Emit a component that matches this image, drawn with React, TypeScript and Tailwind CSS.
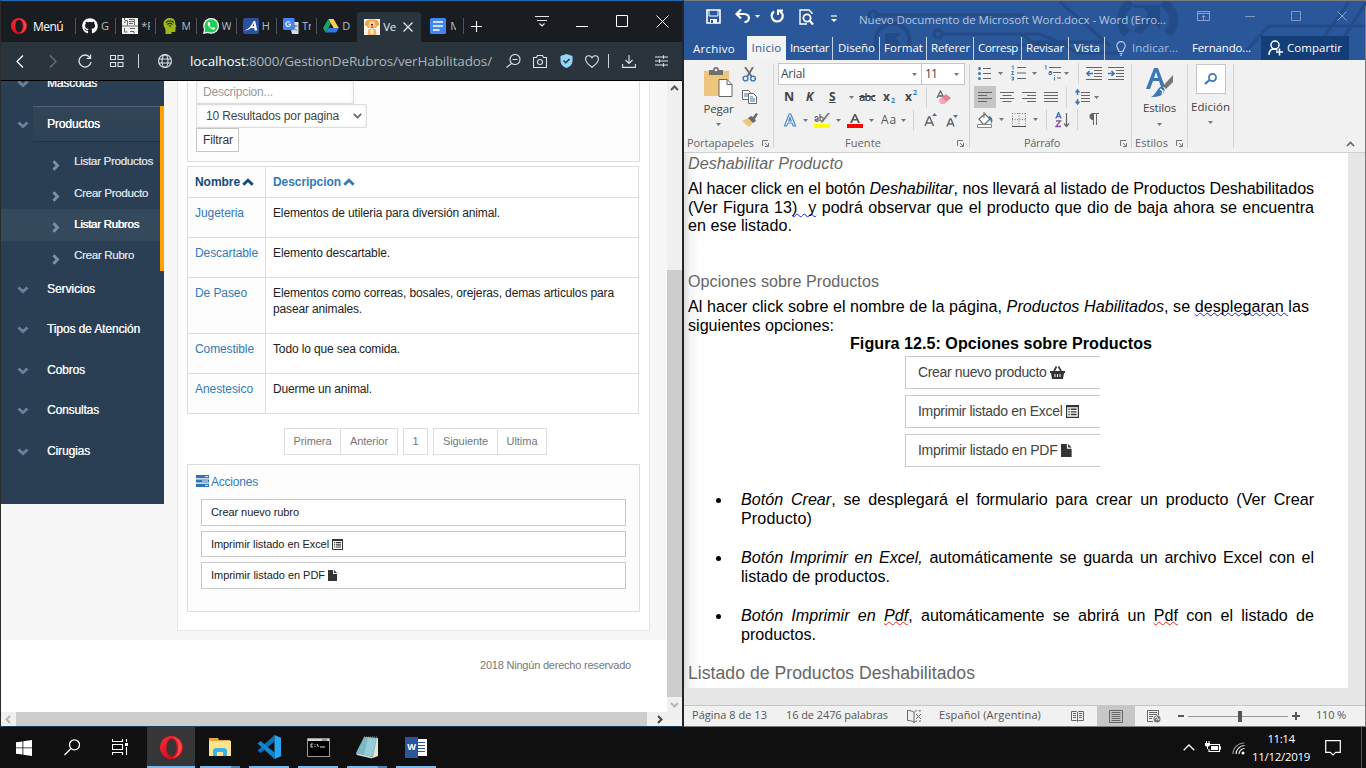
import React, { useLayoutEffect, useRef } from "react";
import { FaGithub } from "react-icons/fa";

const UI = "font-['Open_Sans','Noto_Sans',sans-serif]";
const AR = "font-['Liberation_Sans',Arial,sans-serif]";

/** Text whose tracking is adjusted so that it spans exactly `w` pixels. */
function Fit({ w, className = "", children }: { w: number; className?: string; children: React.ReactNode }) {
  const ref = useRef<HTMLSpanElement>(null);
  useLayoutEffect(() => {
    const el = ref.current;
    if (!el) return;
    el.style.letterSpacing = "0px";
    const natural = el.getBoundingClientRect().width;
    const n = (el.textContent || "").length || 1;
    el.style.letterSpacing = `${(w - natural) / n}px`;
  }, [w]);
  return (
    <span ref={ref} className={`inline-block shrink-0 whitespace-pre ${className}`}>
      {children}
    </span>
  );
}

function Svg({ w, h, className = "", children }: { w: number; h: number; className?: string; children: React.ReactNode }) {
  return (
    <svg width={w} height={h} viewBox={`0 0 ${w} ${h}`} fill="none" className={`block shrink-0 ${className}`}>
      {children}
    </svg>
  );
}

function OperaO({ size, hole }: { size: number; hole: string }) {
  return (
    <svg width={size} height={size} viewBox="0 0 24 24" className="block shrink-0">
      <defs>
        <linearGradient id="og" x1="0" y1="0" x2="1" y2="1">
          <stop offset="0" stopColor="#ff2b3a" />
          <stop offset="0.6" stopColor="#d8101f" />
          <stop offset="1" stopColor="#b00a18" />
        </linearGradient>
      </defs>
      <circle cx="12" cy="12" r="12" fill="url(#og)" />
      <path d="M12 1c6 0 11 5 11 11s-5 11-11 11c5-1 7-6 7-11S17 2 12 1z" fill="#f4494d" />
      <ellipse cx="12" cy="12" rx="5.400" ry="9.400" fill={hole} />
    </svg>
  );
}

function Tab({ icon, label }: { icon: React.ReactNode; label: string }) {
  return (
    <div className="flex h-4 w-[40.2px] shrink-0 items-center border-l border-[#50555b]">
      <div className="ml-[6px] h-4 w-4 shrink-0">{icon}</div>
      <span className="ml-[3px] w-[9px] shrink-0 overflow-hidden text-[11px] leading-4 whitespace-nowrap text-[#b8bcc0]">{label}</span>
    </div>
  );
}

function BrowserTabs() {
  return (
    <div className={`flex h-[41px] shrink-0 bg-[#191c21] ${UI}`}>
      <div className="mt-[16px] flex h-[18px] w-[74px] shrink-0 items-center pl-[10px]">
        <OperaO size={16} hole="#191c21" />
        <Fit w={30} className="mt-[2px] ml-[6px] text-[12px] text-white">Menú</Fit>
      </div>
      <div className="mt-[17px] flex">
        <Tab label="G" icon={<FaGithub size={16} color="#fff" />} />
        <Tab
          label="*F"
          icon={
            <Svg w={16} h={16}>
              <path d="M0 0h16v16H0z" fill="#f2f2f2" />
              <path d="M3 5V2.500h2.500M7 1.500h5.500v2H7M7 5.500h4M0 8h16M2.500 10v4h3M8 10.500h5M8 13.500h4v2M5.500 2.500v5M12.500 4v3M2.500 0v2" stroke="#666" />
            </Svg>
          }
        />
        <Tab
          label="M"
          icon={
            <Svg w={16} h={16}>
              <path d="M8 0C4 0 1.500 2.500 1.500 6c0 3 2 4 2 6v4h6v-2h3c1 0 1-1 1-2V9.500l1-.8-1.200-2.500C13.500 2 11.500 0 8 0z" fill="#9bb71b" />
              <path d="M4 4.500c2.500-2 5.500-2 8 0M5.300 6.500c1.500-1.300 3.800-1.300 5.300 0M7 8.200c.6-.5 1.400-.5 2 0" stroke="#20300a" strokeWidth="1.200" />
            </Svg>
          }
        />
        <Tab
          label="W"
          icon={
            <Svg w={16} h={16}>
              <circle cx="8.100" cy="7.900" r="7.900" fill="#fff" />
              <path d="M0 16l1.200-5L5 15z" fill="#fff" />
              <circle cx="8.100" cy="7.900" r="6.700" fill="#23cc55" />
              <path d="M1.500 14.500l1-4 3 3z" fill="#23cc55" />
              <path d="M5.500 4c-1.500 1-1 3.500 1.500 5.800s4.500 2.300 5.300.5l-2-1.200-1 .9C8 9.400 7 8.500 6.600 7.400l.8-.8L6.500 4z" fill="#fff" />
            </Svg>
          }
        />
        <Tab
          label="H"
          icon={
            <Svg w={16} h={16}>
              <rect width="16" height="16" rx="2.500" fill="#2b4fa2" />
              <path d="M1.500 12.500C6 11 9 7 10.500 3h1.700l2 9.500h-2.600l-.3-2.500H8c-1.500 1.500-3.500 2.500-6.500 2.500zm7.800-4.200h1.900l-.3-3z" fill="#fff" />
            </Svg>
          }
        />
        <Tab
          label="Tr"
          icon={
            <Svg w={16} h={16}>
              <path d="M6 4h9.500v12H9z" fill="#dcdcdc" />
              <rect width="11.500" height="12" rx="1" fill="#4285f4" />
              <path d="M7 4.500A2.400 2.400 0 1 0 7.600 6.300H5.500" stroke="#fff" strokeWidth="1.100" />
              <path d="M9.500 8h5M12 6.800V8c0 2-1.500 4-2.500 4.500M10.500 9c.5 1.500 2 3 3.500 3.500" stroke="#607d9b" />
            </Svg>
          }
        />
        <Tab
          label="D"
          icon={
            <Svg w={16} h={16}>
              <path d="M5.300 1h5.200l5.300 9h-5.200z" fill="#ffcf48" />
              <path d="M5.300 1L0 10l2.700 4.600L7.900 5.500z" fill="#11a861" />
              <path d="M5.400 10h10.400l-2.600 4.600H2.700z" fill="#3777e3" />
            </Svg>
          }
        />
      </div>
      <div className="mt-[11px] ml-[1px] flex h-[30px] w-[64px] shrink-0 items-center rounded-t-[3px] bg-[#2a343c]">
        <Svg w={16} h={16} className="ml-[7px]">
          <path d="M0 0h16v16H0z" fill="#fbf3e6" />
          <path d="M2 2l3-1.500h6L14 2l1.500 4-2.500 1-1 2H4L3 7 .5 6z" fill="#eba24d" />
          <path d="M5.500 2h5l1 5-1.500 2.500h-4L4.500 7z" fill="#f8cf95" />
          <path d="M7 5h2v1.500H7z" fill="#5a2d1b" />
          <path d="M7 7.500h2.500V9H7z" fill="#e24a3b" />
          <path d="M4.500 10h7l1 6h-9z" fill="#f2b463" />
          <path d="M6.500 10.500h3V15h-3z" fill="#fff0d8" />
        </Svg>
        <Fit w={12.5} className="ml-[3px] text-[11.500px] text-[#e8eaec]">Ve</Fit>
        <Svg w={10} h={10} className="ml-[7px]">
          <path d="M.5 .5l9 9M9.500 .5l-9 9" stroke="#e8eaec" strokeWidth="1.200" />
        </Svg>
      </div>
      <div className="mt-[17px] ml-[9px] flex h-4 items-center">
        <Svg w={16} h={16}>
          <rect width="16" height="16" rx="1.500" fill="#4285f4" />
          <path d="M3 4h10M3 8h10M3 12h6.500" stroke="#fff" strokeWidth="1.700" />
        </Svg>
        <span className="ml-[4px] w-[6px] overflow-hidden text-[11.500px] text-[#b8bcc0]">M</span>
        <div className="ml-[7px] h-4 w-px bg-[#50555b]" />
        <Svg w={11} h={11} className="ml-[7px]">
          <path d="M5.500 0v11M0 5.500h11" stroke="#fff" strokeWidth="1.100" />
        </Svg>
      </div>
      <div className="mt-[14px] ml-[53px] flex h-[14px]">
        <Svg w={14} h={14}>
          <path d="M0 1.500h14M2 5.500h10M4.500 8.500L7 11l2.500-2.500" stroke="#e4e6e8" strokeWidth="1.200" />
        </Svg>
        <Svg w={12} h={14} className="ml-[27px]">
          <path d="M0 11.500h12" stroke="#fff" />
        </Svg>
        <Svg w={12} h={14} className="ml-[28px]">
          <path d="M.5 .5h11v11H.5z" stroke="#fff" />
        </Svg>
        <Svg w={13} h={14} className="ml-[28px]">
          <path d="M.5 .5l12 12M12.500 .5l-12 12" stroke="#fff" />
        </Svg>
      </div>
    </div>
  );
}

function AddressBar() {
  const s = { stroke: "#dfe3e6", strokeWidth: 1.1 };
  return (
    <div className={`flex h-[38px] shrink-0 items-center bg-[#2a343c] ${UI}`}>
      <Svg w={8} h={13} className="ml-[15px]"><path d="M7 .5L1 6.500l6 6" stroke="#fff" strokeWidth="1.200" /></Svg>
      <Svg w={8} h={13} className="ml-[25px]"><path d="M1 .5l6 6-6 6" stroke="#6c757c" strokeWidth="1.200" /></Svg>
      <Svg w={14} h={14} className="ml-[21px]"><path d="M11.800 3.300A6 6 0 1 0 13 8M12.500 .5v3.800H8.700" {...s} strokeWidth="1.300" /></Svg>
      <Svg w={14} h={12} className="ml-[18px]"><path d="M.5 .5h5v4h-5zM8 .5h5v4H8zM.5 7.500h5v4h-5zM8 7.500h5v4H8z" {...s} /></Svg>
      <div className="ml-[14px] h-[14px] w-px bg-[#cdd1d4]" />
      <Svg w={14} h={14} className="ml-[19px]">
        <circle cx="7" cy="7" r="6.400" {...s} />
        <ellipse cx="7" cy="7" rx="3" ry="6.400" {...s} />
        <path d="M.6 5h12.800M.6 9h12.800" {...s} />
      </Svg>
      <Fit w={302} className="ml-[18px] text-[13.500px] text-[#a9b4bc]"><span className="text-white">localhost</span><span className="text-[#c9d1d6]">:</span>8000/GestionDeRubros/verHabilitados/</Fit>
      <Svg w={15} h={14} className="ml-[14px]"><circle cx="9" cy="5.500" r="5" {...s} /><path d="M5.500 9.500L.5 13.500M6.500 5.500h5" {...s} /></Svg>
      <Svg w={14} h={13} className="ml-[12px]"><path d="M.5 2.500h3l1-2h5l1 2h3v10H.5z" {...s} /><circle cx="7" cy="7" r="2.500" {...s} /></Svg>
      <Svg w={13} h={14} className="ml-[13px]"><path d="M6.500 0L12.500 2v5c0 3.500-3 6-6 7-3-1-6-3.500-6-7V2z" fill="#92d6fb" /><path d="M3.500 6.500l2.300 2.300L9.500 5" stroke="#2a343c" strokeWidth="1.500" /></Svg>
      <Svg w={14} h={13} className="ml-[12px]"><path d="M7 12.300C2 8.500.6 6.500.6 4.200.6 2 2 .7 3.800.7 5.300.7 6.500 1.600 7 2.700 7.500 1.600 8.700.7 10.200.7 12 .7 13.400 2 13.400 4.200c0 2.300-1.400 4.300-6.400 8.100z" {...s} /></Svg>
      <div className="ml-[9px] h-[14px] w-px bg-[#cdd1d4]" />
      <Svg w={14} h={13} className="ml-[13px]"><path d="M7 0v8.500M3.500 5L7 8.500 10.500 5M.6 9v3.400h12.800V9" {...s} /></Svg>
      <Svg w={13} h={12} className="ml-[19px]"><path d="M0 2h13M0 6h13M0 10h13M8.500 .3v3.400M4.500 4.300v3.400M8.500 8.300v3.400" {...s} /></Svg>
    </div>
  );
}

function ChevDown() {
  return <Svg w={12} h={8} className="ml-[16px] mt-[1px]"><path d="M1.500 1.500L6 5.500l4.500-4" stroke="#66829c" strokeWidth="3" /></Svg>;
}
function SideItem({ label, w }: { label: string; w: number }) {
  return (
    <div className="flex h-[40.500px] items-center">
      <ChevDown />
      <Fit w={w} className="-mt-px ml-[18px] text-[12px] text-[#eef1f4] [text-shadow:0.2px_0_0_#eef1f4]">{label}</Fit>
    </div>
  );
}
function SubItem({ label, w, active = false }: { label: string; w: number; active?: boolean }) {
  return (
    <div className={`flex h-[31.200px] items-center ${active ? "bg-[#35495d]" : ""}`}>
      <Svg w={8} h={11} className="mt-[6px] ml-[51px]"><path d="M1.500 1.200l4 4.300-4 4.300" stroke="#7a92a8" strokeWidth="2.800" /></Svg>
      <Fit w={w} className={`-mt-[1px] ml-[14px] text-[11.500px] ${active ? "text-white [text-shadow:0.5px_0_0_#fff]" : "text-[#d3d9df] [text-shadow:0.2px_0_0_#d3d9df]"}`}>{label}</Fit>
    </div>
  );
}

function Sidebar() {
  return (
    <div className="h-[423px] w-[163px] shrink-0 overflow-hidden bg-[#2b3f54]">
      <div className="-mt-[18px] h-[43px]"><SideItem label="Mascotas" w={50} /></div>
      <div className="h-[165px] border-r-4 border-[#ffa200]">
        <div className="flex h-[36px] items-center">
          <ChevDown />
          <div className="ml-[4px] flex h-full flex-1 items-center border-t border-b border-t-[#4b6074] border-b-[#22333f] bg-gradient-to-b from-[#334556] to-[#2c4257]">
            <Fit w={53} className="ml-[14px] text-[12px] text-white [text-shadow:0.2px_0_0_#fff]">Productos</Fit>
          </div>
        </div>
        <div className="pt-[5px]">
          <SubItem label="Listar Productos" w={79} />
          <SubItem label="Crear Producto" w={74} />
          <SubItem label="Listar Rubros" w={65} active />
          <SubItem label="Crear Rubro" w={60} />
        </div>
      </div>
      <div className="-mt-[2px]">
        <SideItem label="Servicios" w={48} />
        <SideItem label="Tipos de Atención" w={93} />
        <SideItem label="Cobros" w={38} />
        <SideItem label="Consultas" w={52} />
        <SideItem label="Cirugias" w={43} />
      </div>
    </div>
  );
}

const rows = [
  { n: "Jugeteria", nw: 49, d: [["Elementos de utileria para diversión animal.", 227]], cls: "h-[40px]" },
  { n: "Descartable", nw: 63, d: [["Elemento descartable.", 117]], cls: "h-[40px]" },
  { n: "De Paseo", nw: 52, d: [["Elementos como correas, bosales, orejeras, demas articulos para", 341], ["pasear animales.", 89]], cls: "h-[56px]" },
  { n: "Comestible", nw: 59, d: [["Todo lo que sea comida.", 127]], cls: "h-[40px]" },
  { n: "Anestesico", nw: 58, d: [["Duerme un animal.", 99]], cls: "h-[40px]" },
] as { n: string; nw: number; d: [string, number][]; cls: string }[];

function SortUp({ color }: { color: string }) {
  return <Svg w={12} h={8} className="ml-[2px]"><path d="M1.300 6.800L6 2.300l4.700 4.500" stroke={color} strokeWidth="2.800" /></Svg>;
}
function ListIcon({ size = 11 }: { size?: number }) {
  return (
    <svg width={size} height={size} viewBox="0 0 11 11" className="block shrink-0">
      <path d="M.5 .5h10v10H.5z" fill="#fff" stroke="#333" />
      <path d="M0 0h11v2H0zM2 3h1.200v1.200H2zM2 5.200h1.200v1.200H2zM2 7.400h1.200v1.200H2zM4 3h5v1.200H4zM4 5.200h5v1.200H4zM4 7.400h5v1.200H4z" fill="#333" />
    </svg>
  );
}
function FileIcon({ size = 11 }: { size?: number }) {
  return (
    <svg width={(size * 9) / 11} height={size} viewBox="0 0 9 11" className="block shrink-0">
      <path d="M0 0h5v4h4v7H0z" fill="#333" />
      <path d="M6 0l3 3H6z" fill="#333" />
    </svg>
  );
}

function PageBtn({ label, w, cls }: { label: string; w: number; cls: string }) {
  return (
    <div className={`flex h-[27px] items-center justify-center border border-[#ddd] bg-white pb-px text-[11px] text-[#777] ${cls}`}>
      <Fit w={w}>{label}</Fit>
    </div>
  );
}

function MainContent() {
  return (
    <div className="w-[503px] shrink-0 bg-white">
      <div className="h-[559px] bg-[#f7f7f7] pl-[13px]">
        <div className="h-[550px] w-[473px] border border-t-0 border-[#e6e6e6] bg-white pl-[9px]">
          <div className="h-[81px] w-[453px] border border-t-0 border-[#ddd] bg-[#fdfdfd] pl-[8px]">
            <div className="flex h-[23px] w-[158px] items-center border border-t-0 border-[#ddd] bg-white pl-[6px] text-[12px] text-[#999] shadow-[inset_0_0_4px_#eee]">
              <Fit w={70}>Descripcion...</Fit>
            </div>
            <div className="flex h-[24px] w-[171px] items-center border border-[#ddd] bg-white pl-[9px] text-[12px] text-[#444] shadow-[inset_0_0_4px_#eee]">
              <Fit w={133}>10 Resultados por pagina</Fit>
              <Svg w={9} h={6} className="ml-[14px]"><path d="M.8 .8l3.700 3.700L8.200 .8" stroke="#666" strokeWidth="1.700" /></Svg>
            </div>
            <div className="flex h-[24px] w-[43px] items-center border border-[#c6c6c6] bg-white pl-[6px] text-[12px] text-[#333]">
              <Fit w={30}>Filtrar</Fit>
            </div>
          </div>
          <div className="mt-[4px] w-[452px] border border-[#ddd] text-[12px]">
            <div className="flex h-[30px]">
              <div className="flex w-[78px] items-center border-r border-[#ddd] bg-[#fdfdfd] pl-[7px] font-bold text-[#144a78]"><Fit w={45}>Nombre</Fit><SortUp color="#144a78" /></div>
              <div className="flex flex-1 items-center pl-[7px] font-bold text-[#337ab7]"><Fit w={68}>Descripcion</Fit><SortUp color="#337ab7" /></div>
            </div>
            {rows.map((r) => (
              <div key={r.n} className={`flex border-t border-[#ddd] leading-4 ${r.cls}`}>
                <div className="w-[78px] shrink-0 border-r border-[#ddd] bg-[#fdfdfd] pt-[7px] pl-[7px] text-[#337ab7]"><Fit w={r.nw}>{r.n}</Fit></div>
                <div className="flex flex-col items-start pt-[7px] pl-[7px] text-[#222]">
                  {r.d.map(([t, w]) => <Fit key={t} w={w}>{t}</Fit>)}
                </div>
              </div>
            ))}
          </div>
          <div className="mt-[14px] ml-[97px] flex">
            <PageBtn label="Primera" w={38} cls="w-[57px]" />
            <PageBtn label="Anterior" w={38} cls="-ml-px w-[58px]" />
            <PageBtn label="1" w={6} cls="ml-[5px] w-[25px]" />
            <PageBtn label="Siguiente" w={45} cls="ml-[5px] w-[65px]" />
            <PageBtn label="Ultima" w={31} cls="-ml-px w-[50px]" />
          </div>
          <div className="mt-[9px] h-[148px] w-[453px] border border-[#ddd] bg-[#fdfdfd] pl-[8px]">
            <div className="flex h-[34px] items-center text-[12px] text-[#337ab7]">
              <Svg w={13} h={12} className="-mt-[2px]"><path d="M0 0h13v3.200H0zM0 4.400h13v3.200H0zM0 8.800h13V12H0z" fill="#2f75b5" /><path d="M9 1.600h3M6 6h6M9 10.400h3" stroke="#fff" strokeWidth="0.900" /></Svg>
              <Fit w={47} className="ml-[2px]">Acciones</Fit>
            </div>
            <div className="ml-[5px] flex w-[425px] flex-col text-[11px] text-[#222]">
              <div className="flex h-[27px] items-center border border-[#c8c8c8] bg-white pl-[9px]"><Fit w={88}>Crear nuevo rubro</Fit></div>
              <div className="mt-[5px] flex h-[26px] items-center border border-[#c8c8c8] bg-white pl-[9px]"><Fit w={121}>Imprimir listado en Excel </Fit><ListIcon /></div>
              <div className="mt-[5px] flex h-[27px] items-center border border-[#c8c8c8] bg-white pl-[9px]"><Fit w={117}>Imprimir listado en PDF </Fit><FileIcon /></div>
            </div>
          </div>
        </div>
      </div>
      <div className="pt-[17px] pl-[316px] text-[11px] leading-4 text-[#777]"><Fit w={151}>2018 Ningún derecho reservado</Fit></div>
    </div>
  );
}

function Browser() {
  return (
    <div className={`flex h-[727px] w-[684px] shrink-0 flex-col overflow-hidden border-t border-r-2 border-b border-l border-t-[#1c6ab0] border-r-[#20262b] border-b-[#17415c] border-l-[#2b2b2b] bg-white ${AR}`}>
      <BrowserTabs />
      <AddressBar />
      <div className="h-px shrink-0 bg-black" />
      <div className="flex h-[631px] shrink-0">
        <div className="flex w-[666px] shrink-0 overflow-hidden">
          <div className="w-[163px] shrink-0">
            <Sidebar />
            <div className="h-[136px] bg-[#f7f7f7]" />
          </div>
          <MainContent />
        </div>
        <div className="flex w-[15px] flex-col items-center bg-[#f0f0f0]">
          <Svg w={9} h={6} className="mt-[4px]"><path d="M1 5l3.500-3.500L8 5" stroke="#555" strokeWidth="2" /></Svg>
          <div className="mt-[179px] h-[427px] w-full bg-[#cdcdcd]" />
          <Svg w={9} h={6} className="mt-[5px]"><path d="M1 1l3.500 3.500L8 1" stroke="#b5b5b5" strokeWidth="2" /></Svg>
        </div>
      </div>
      <div className="flex h-[14px] flex-1 items-center bg-[#f0f0f0]">
        <Svg w={6} h={9} className="ml-[4px]"><path d="M5 1L1.500 4.500 5 8" stroke="#b5b5b5" strokeWidth="2" /></Svg>
        <div className="ml-[5px] h-full w-[631px] bg-[#cdcdcd]" />
        <Svg w={6} h={9} className="ml-[10px]"><path d="M1 1l3.500 3.500L1 8" stroke="#444" strokeWidth="2" /></Svg>
      </div>
    </div>
  );
}

function WordTitle() {
  return (
    <div className="relative h-[59px] shrink-0 bg-[#2a579a]">
      <svg width="682" height="59" viewBox="684 1 682 59" fill="none" className="absolute inset-0" stroke="#234b88" strokeWidth="3">
        <path d="M877 15h145l8 7M942 34h80l10 8h72M1015 45h50l12 8h44M1024 34h15l25 10M1060 2l50 44M1245 52l24-26h96M1330 60l36-58M1315 50l34-48" />
        <circle cx="873" cy="15" r="4" />
        <circle cx="938" cy="34" r="4" />
        <path d="M880 52a17 17 0 1 1 25 0" strokeWidth="4" />
        <path d="M885 33h16l-5 5 9 14h-7l-8-8-5 5z" fill="#234b88" stroke="none" />
        <path d="M1131 2c-12 10-12 22-4 32M1163 2c13 10 13 22 5 32" strokeWidth="9" />
        <path d="M1134 5h26v24l-7-7-12 12-8-2 16-18-6-6h-9z" fill="#234b88" stroke="none" />
      </svg>
      <div className="relative flex h-[35px] items-start text-white">
        <Svg w={15} h={15} className="mt-[8px] ml-[22px]"><path d="M1 1h13v13H1z" stroke="#fff" strokeWidth="1.600" /><path d="M3 7h9M3 7V1M12 7V1" stroke="#fff" strokeWidth="1" /><path d="M4 10h7v4H4z" fill="#fff" /><path d="M5 11h2v3H5z" fill="#2a579a" /></Svg>
        <Svg w={16} h={14} className="mt-[8px] ml-[14px]"><path d="M2 5h7c7 0 6 8 .5 8" stroke="#fff" strokeWidth="2.200" /><path d="M6 .5L1.500 5 6 9.500" stroke="#fff" strokeWidth="2.200" /></Svg>
        <Svg w={5} h={3} className="mt-[14px] ml-[4px]"><path d="M0 0h5L2.500 3z" fill="#fff" /></Svg>
        <Svg w={14} h={14} className="mt-[8px] ml-[10px]"><path d="M4 2.500A5.500 5.500 0 1 0 9.500 2" stroke="#fff" strokeWidth="2.200" /><path d="M8 6V1.500h5" stroke="#fff" strokeWidth="2" /></Svg>
        <Svg w={15} h={17} className="mt-[8px] ml-[15px]"><path d="M13 5V4L10 1H1v14h7" stroke="#fff" strokeWidth="1.400" /><circle cx="8" cy="9" r="3.600" stroke="#fff" strokeWidth="1.800" /><path d="M10.500 11.500l3.500 4" stroke="#fff" strokeWidth="2.200" /></Svg>
        <Svg w={6} h={8} className="mt-[14px] ml-[17px]"><path d="M0 1h6" stroke="#fff" strokeWidth="1.200" /><path d="M0 4h6L3 7z" fill="#fff" /></Svg>
        <Fit w={307} className="mt-[10px] ml-[22px] text-[11.500px] leading-[17px] text-[#b5c5df]">Nuevo Documento de Microsoft Word.docx - Word (Erro...</Fit>
        <Svg w={13} h={10} className="mt-[10px] ml-[31px]"><path d="M.5 .5h12v9H.5zM.5 2.500h12M6.500 9V4.500M4.500 6.300l2-2 2 2" stroke="#8ba4cb" /></Svg>
        <Svg w={10} h={1} className="mt-[15px] ml-[35px]"><path d="M0 .5h10" stroke="#7f9ac4" /></Svg>
        <Svg w={10} h={10} className="mt-[10px] ml-[36px]"><path d="M.5 .5h9v9h-9z" stroke="#7f9ac4" /></Svg>
        <Svg w={10} h={10} className="mt-[10px] ml-[36px]"><path d="M.5 .5l9 9M9.500 .5l-9 9" stroke="#8ba4cb" /></Svg>
      </div>
      <div className="relative flex h-[24px] items-center text-[11.500px] leading-[20px] text-white">
        <Fit w={42} className="mt-[1px] ml-[9px]">Archivo</Fit>
        <div className="ml-[12px] flex h-full w-[39px] items-center justify-center bg-[#f4f4f4] text-[#2a579a]"><Fit w={30}>Inicio</Fit></div>
        <Fit w={39} className="ml-[4px]">Insertar</Fit>
        <div className="ml-[3px] h-[23px] w-px bg-[#c8d4e6]" />
        <Fit w={37} className="ml-[5px]">Diseño</Fit>
        <div className="ml-[4px] h-[23px] w-px bg-[#c8d4e6]" />
        <Fit w={39} className="ml-[4px]">Format</Fit>
        <div className="ml-[3px] h-[23px] w-px bg-[#c8d4e6]" />
        <Fit w={39} className="ml-[4px]">Referer</Fit>
        <div className="ml-[3px] h-[23px] w-px bg-[#c8d4e6]" />
        <Fit w={40} className="ml-[4px]">Corresp</Fit>
        <div className="ml-[3px] h-[23px] w-px bg-[#c8d4e6]" />
        <Fit w={38} className="ml-[4px]">Revisar</Fit>
        <div className="ml-[4px] h-[23px] w-px bg-[#c8d4e6]" />
        <Fit w={26} className="ml-[5px]">Vista</Fit>
        <div className="ml-[4px] h-[23px] w-px bg-[#c8d4e6]" />
        <Svg w={10} h={15} className="ml-[11px]"><path d="M3 10.500C3 8.500 .8 7.500 .8 4.800a4.200 4.200 0 0 1 8.400 0C9.200 7.500 7 8.500 7 10.500zM3.500 12.500h3M4 14.300h2" stroke="#c5d1e5" strokeWidth="1.100" /></Svg>
        <Fit w={46} className="ml-[6px] text-[#a9bcda]">Indicar...</Fit>
        <Fit w={59} className="ml-[14px]">Fernando...</Fit>
        <div className="ml-[10px] flex h-full w-[88px] items-center bg-[#143e78]">
          <Svg w={16} h={16} className="ml-[7px]"><circle cx="7" cy="5" r="4" stroke="#fff" strokeWidth="1.500" /><path d="M1 15c0-4 2-6 5-6 1.500 0 3 .5 3.500 1.500M11.500 8.500v7M8 12h7" stroke="#fff" strokeWidth="1.500" /></Svg>
          <Fit w={55} className="ml-[3px]">Compartir</Fit>
        </div>
      </div>
    </div>
  );
}

const G = "#666";
const B = "#3b78b8";
function Dd({ className = "" }: { className?: string }) {
  return <Svg w={5} h={3} className={className}><path d="M0 0h5L2.500 3z" fill="#777" /></Svg>;
}
function Launcher({ className = "" }: { className?: string }) {
  return <Svg w={7} h={7} className={className}><path d="M.5 6V.5H6M3 3l3 3M6.500 3v3.500H3" stroke="#777" /></Svg>;
}
function VLine({ className = "" }: { className?: string }) {
  return <div className={`w-px shrink-0 bg-[#d4d4d4] ${className}`} />;
}
function Lines({ d }: { d: string }) {
  return <path d={d} stroke={G} strokeWidth="1" />;
}

function Ribbon() {
  return (
    <div className="flex h-[93px] shrink-0 border-b border-[#cfcfcf] bg-[#f1f1f1] text-[#444]">
      <div className="flex w-[89px] flex-col">
        <div className="flex h-[74px]">
          <div className="flex w-[52px] flex-col items-center pl-[17px]">
            <Svg w={29} h={31} className="mt-[7px]">
              <path d="M0 4h25v25H0z" fill="#eec57c" />
              <path d="M5 3h4c0-4 6-4 6 0h4v5H5z" fill="#707070" /><circle cx="12" cy="3" r="1.300" fill="#f1f1f1" />
              <path d="M15 12.500h8l5 5v12H15z" fill="#fff" stroke="#666" /><path d="M23 12.500v5h5" stroke="#666" />
            </Svg>
            <Fit w={30} className="mt-[3px] text-[11.500px] leading-4">Pegar</Fit>
            <Dd className="mt-[6px]" />
          </div>
          <div className="ml-[6px] pt-[7px]">
            <Svg w={15} h={15}><path d="M3 0l7 10M11 0L5 10" stroke="#6b6b6b" strokeWidth="1.800" /><circle cx="3.500" cy="11.500" r="2.400" stroke={B} strokeWidth="1.400" /><circle cx="11" cy="11.500" r="2.400" stroke={B} strokeWidth="1.400" /></Svg>
            <Svg w={15} h={14} className="mt-[8px]"><path d="M.5 .5h6l2 2v7h-8z" fill="#fff" stroke={G} /><path d="M2 4h4M2 6h4" stroke={B} /><path d="M6.500 3.500h5l3 3v7h-8z" fill="#fff" stroke={G} /><path d="M8 7h3M8 9h5M8 11h5" stroke={B} /></Svg>
            <Svg w={16} h={14} className="mt-[9px]"><path d="M0 8l6-3 5 5-4 4z" fill="#eec57c" /><path d="M6 5l3-2 2 1 3-4 2 1-3 5 1 2-3 2z" fill="#6b6b6b" /></Svg>
          </div>
        </div>
        <div className="flex items-center pl-[3px] text-[11px] leading-[18px] text-[#666]"><Fit w={67}>Portapapeles</Fit><Launcher className="ml-[8px]" /></div>
      </div>
      <VLine className="mt-[4px] h-[84px]" />
      <div className="flex w-[195px] flex-col">
        <div className="mt-[3px] ml-[4px] flex h-[22px] w-[187px] border border-[#c6c6c6] bg-white text-[12px] leading-[20px]">
          <div className="flex w-[143px] items-center border-r border-[#c6c6c6]"><Fit w={24} className="ml-[2px]">Arial</Fit><Dd className="ml-[107px]" /></div>
          <Fit w={12} className="ml-[3px]">11</Fit><Dd className="mt-[9px] ml-[17px]" />
        </div>
        <div className="flex h-[24px] items-center pl-[10px] text-[12px] leading-5 font-bold text-[#444]">
          <span className="w-[22px] text-[12.500px]">N</span><span className="w-[23px] italic">K</span><span className="w-[18px] underline">S</span>
          <Dd className="ml-[2px]" /><Fit w={16} className="ml-[5px] text-[11px] font-semibold line-through">abc</Fit>
          <Fit w={8} className="ml-[8px]">x</Fit><span className="mt-[7px] text-[7px] text-[#3b78b8]">2</span>
          <Fit w={8} className="ml-[10px]">x</Fit><span className="-mt-[8px] text-[7px] text-[#3b78b8]">2</span>
          <VLine className="ml-[9px] h-[21px]" />
          <Svg w={15} h={15} className="ml-[9px]"><path d="M1 8l3.500-7L8 8M2 6h5" stroke={G} strokeWidth="1.300" /><path d="M3 10l7-6 5 4-7 6H5z" fill="#ea7f92" /><path d="M3 10l3-2.500 4 4L8 14H5z" fill="#f3aab6" /></Svg>
        </div>
        <div className="flex h-[22px] items-center pl-[9px] text-[#555]">
          <Svg w={14} h={14}><path d="M1.500 13L6.200 1h1.600l4.700 12h-2.300L9 10H5l-1.200 3zM5.800 8h2.400L7 4.500z" stroke="#4a86c5" strokeWidth="1.200" fill="#fff" /></Svg>
          <Dd className="ml-[6px]" />
          <Svg w={17} h={16} className="ml-[6px]"><path d="M0 12h16v4H0z" fill="#ffff00" /><path d="M1 6c0-2 3-2 3 0v3c-4 .6-4-2.500 0-2M6 2v7M6 6c1-2 4-1 3 2-1 1.500-3 1-3 0" stroke="#555" strokeWidth="1.100" /><path d="M16 1l-7 9-2 1 1-3 6-7z" fill="#777" /></Svg>
          <Dd className="ml-[5px]" />
          <Svg w={16} h={15} className="ml-[6px]"><path d="M3 10L7.200 1h1.600L13 10h-2L10 7.600H6L5 10zM6.600 6h2.800L8 3z" fill="#555" /><path d="M0 11h16v4H0z" fill="#ff0000" /></Svg>
          <Dd className="ml-[6px]" />
          <Fit w={16} className="ml-[7px] text-[12px] leading-5">Aa</Fit>
          <Dd className="ml-[4px]" />
          <VLine className="ml-[7px] h-[21px]" />
          <Svg w={13} h={14} className="ml-[10px]"><path d="M1 13L4.700 4h1L9.500 13M2.300 10h5.800" stroke={G} strokeWidth="1.500" /><path d="M8 3l2.500-3L13 3z" fill={B} /></Svg>
          <Svg w={12} h={13} className="ml-[9px]"><path d="M1 12.500L4 5h1l3 7.500M2 10h5" stroke={G} strokeWidth="1.500" /><path d="M7 1h5L9.500 4z" fill={B} /></Svg>
        </div>
        <div className="mt-[3px] flex items-center pl-[71px] text-[11px] leading-[18px] text-[#666]"><Fit w={36}>Fuente</Fit><Launcher className="ml-[76px]" /></div>
      </div>
      <VLine className="mt-[4px] h-[84px]" />
      <div className="flex w-[161px] flex-col">
        <div className="flex h-[26px] items-center pl-[8px]">
          <Svg w={13} h={15}><path d="M5 2.500h8M5 7.500h8M5 12.500h8" stroke={G} /><circle cx="1.500" cy="2.500" r="1.500" fill={B} /><circle cx="1.500" cy="7.500" r="1.500" fill={B} /><circle cx="1.500" cy="12.500" r="1.500" fill={B} /></Svg>
          <Dd className="ml-[7px]" />
          <Svg w={15} h={16} className="ml-[8px]"><path d="M6 2.500h9M6 8h9M6 13.500h9" stroke={G} /><path d="M1 1.500l1-1v4M.5 6.500h2L.7 9.500h2.300M.5 12h2v1.500h-1 1V15h-2" stroke={B} /></Svg>
          <Dd className="ml-[6px]" />
          <Svg w={17} h={16} className="ml-[7px]"><path d="M5 2.500h12M9 7.500h8M13 13h4" stroke={G} /><path d="M1 1l1-.5v4M5 6.500h2.500v3H5v-2h2M10.500 10v1M10.500 12v3.500" stroke={B} /></Svg>
          <Dd className="ml-[3px]" />
          <VLine className="ml-[9px] h-[21px]" />
          <Svg w={16} h={13} className="ml-[7px]"><Lines d="M0 .5h16M8 3.500h8M8 6.500h8M8 9.500h8M0 12.500h16" /><path d="M7 6.500H1M3.500 4L1 6.500 3.500 9" stroke={B} strokeWidth="1.700" /></Svg>
          <Svg w={16} h={13} className="ml-[6px]"><Lines d="M0 .5h16M8 3.500h8M8 6.500h8M8 9.500h8M0 12.500h16" /><path d="M0 6.500h6M3.500 4L6 6.500 3.500 9" stroke={B} strokeWidth="1.700" /></Svg>
        </div>
        <div className="flex h-[22px] items-center pl-[4px]">
          <div className="flex h-[22px] w-[22px] items-center justify-center bg-[#c5c5c5]"><Svg w={14} h={10}><Lines d="M0 .5h14M0 3.500h9M0 6.500h14M0 9.500h9" /></Svg></div>
          <Svg w={14} h={10} className="ml-[4px]"><Lines d="M0 .5h14M2.500 3.500h9M0 6.500h14M2.500 9.500h9" /></Svg>
          <Svg w={14} h={10} className="ml-[8px]"><Lines d="M0 .5h14M5 3.500h9M0 6.500h14M5 9.500h9" /></Svg>
          <Svg w={14} h={10} className="ml-[8px]"><Lines d="M0 .5h14M0 3.500h14M0 6.500h14M0 9.500h14" /></Svg>
          <VLine className="ml-[8px] h-[21px]" />
          <Svg w={15} h={16} className="ml-[8px]"><path d="M6 3.500h9M6 6.500h9M6 9.500h9M6 12.500h9" stroke={G} /><path d="M2.500 1v5M.5 3.500l2-2.500 2 2.500M2.500 10v5M.5 12.500l2 2.500 2-2.500" stroke={B} strokeWidth="1.500" /></Svg>
          <Dd className="ml-[4px]" />
        </div>
        <div className="flex h-[23px] items-center pl-[7px]">
          <Svg w={16} h={16}><path d="M2 7l6-5 5 5-5 5H6z" stroke={G} fill="#fff" strokeWidth="1.200" /><path d="M7 0v6" stroke={G} /><path d="M12 4c4 1 4 5 2.500 8-.5-3-1-4-3-5z" fill={B} /><path d="M.5 12.500h14v3H.5z" fill="#fff" stroke="#888" /></Svg>
          <Dd className="ml-[6px]" />
          <Svg w={14} h={14} className="ml-[8px]"><path d="M.5 0v13M13.500 0v13M7 0v13M0 .5h14M0 6.500h14" stroke="#777" strokeDasharray="1 1.500" /><path d="M0 13.500h14" stroke="#555" /></Svg>
          <Dd className="ml-[7px]" />
          <VLine className="ml-[8px] h-[21px]" />
          <Svg w={15} h={16} className="ml-[8px]"><path d="M.8 6.500L3.500 .5l2.700 6M1.600 4.500h4" stroke={B} strokeWidth="1.300" /><path d="M1 9h4.500L1 14.500h5" stroke="#8d4fa8" strokeWidth="1.300" /><path d="M11.500 1v13M9 11.500l2.500 3 2.500-3" stroke={G} strokeWidth="1.200" /></Svg>
          <VLine className="ml-[7px] h-[21px]" />
          <Svg w={11} h={13} className="ml-[10px]"><path d="M5 0a3 3 0 0 0 0 7z" fill={G} /><path d="M4 .5h7M5.500 0v12M8.500 0v12" stroke={G} /></Svg>
        </div>
        <div className="mt-[3px] flex items-center pl-[54px] text-[11px] leading-[18px] text-[#666]"><Fit w={36}>Párrafo</Fit><Launcher className="ml-[60px]" /></div>
      </div>
      <VLine className="mt-[4px] h-[84px]" />
      <div className="flex w-[55px] flex-col">
        <div className="flex h-[74px] flex-col items-center">
          <Svg w={28} h={30} className="mt-[8px]"><path d="M0 21L8 0h4l7 19h-4l-2-6H7l-3 8zM8 10h4l-2-6z" fill={B} /><path d="M27 7v7l-7 7-3-3z" fill="#777" /><path d="M13 20c3-3 7 0 5 4-2 4-6 5-13 5 4-2 5-6 8-9z" fill={B} /><path d="M14 21l3 2-1 3" stroke="#fff" strokeWidth="1.300" /></Svg>
          <Fit w={33} className="mt-[2px] text-[11.500px] leading-4">Estilos</Fit>
          <Dd className="mt-[7px]" />
        </div>
        <div className="flex items-center pl-[3px] text-[11px] leading-[18px] text-[#666]"><Fit w={33}>Estilos</Fit><Launcher className="ml-[8px]" /></div>
      </div>
      <VLine className="mt-[4px] h-[84px]" />
      <div className="flex w-[45px] flex-col items-center">
        <div className="mt-[4px] flex h-[30px] w-[30px] items-center justify-center border border-[#c6c6c6] bg-white"><Svg w={13} h={12}><circle cx="8.500" cy="4.500" r="3.600" stroke={B} strokeWidth="1.700" /><path d="M5.500 7L1 11" stroke={B} strokeWidth="2.200" /></Svg></div>
        <Fit w={39} className="mt-[5px] text-[11.500px] leading-4">Edición</Fit>
        <Dd className="mt-[6px]" />
      </div>
      <VLine className="mt-[4px] h-[84px]" />
      <Svg w={9} h={6} className="mt-[81px] ml-[112px]"><path d="M1 5l3.500-3.500L8 5" stroke="#666" strokeWidth="1.700" /></Svg>
    </div>
  );
}

const J = "block w-[626px] [text-align-last:justify] whitespace-nowrap";
const JB = "block w-[573px] [text-align-last:justify] whitespace-nowrap";

function Squiggle({ color, children }: { color: "blue" | "red"; children: React.ReactNode }) {
  return <span className={`underline decoration-wavy decoration-[1px] underline-offset-[0px] [text-decoration-skip-ink:none] ${color === "blue" ? "decoration-[#2222dd]" : "decoration-[#ee2222]"}`}>{children}</span>;
}

function FigureBtn({ label, w, icon, cls }: { label: string; w: number; icon: React.ReactNode; cls: string }) {
  return (
    <div className={`flex w-[195px] items-center border border-r-0 border-[#c9c9c9] pl-[12px] text-[14px] text-[#444] ${cls}`}>
      <Fit w={w}>{label}</Fit>{icon}
    </div>
  );
}

function Bullet({ children }: { children: React.ReactNode }) {
  return (
    <div className="mb-[20px] flex h-[38px]">
      <div className="mt-[8px] ml-[28px] h-[5px] w-[5px] rounded-full bg-black" />
      <div className="ml-[20px]">{children}</div>
    </div>
  );
}

function Document() {
  return (
    <div className={`flex h-[552px] shrink-0 bg-[#e6e6e6] ${AR}`}>
      <div className="h-[535px] w-[664px] overflow-hidden bg-[linear-gradient(to_right,#dedede_0,#f4f4f4_6px,#fff_16px)] pl-[4px] text-[16.130px] leading-[18.700px] text-black">
        <div className="h-[26px] pt-[1px] text-[#666] italic"><Fit w={155}>Deshabilitar Producto</Fit></div>
        <div className="h-[18.700px]"><Fit w={626}>Al hacer click en el botón <i>Deshabilitar</i>, nos llevará al listado de Productos Deshabilitados</Fit></div>
        <span className={J}>(Ver Figura 13<Squiggle color="blue">)&nbsp; y</Squiggle> podrá observar que el producto que dio de baja ahora se encuentra</span>
        <Fit w={104} className="block">en ese listado.</Fit>
        <div className="mt-[37px] h-[25px] text-[#666]"><Fit w={191}>Opciones sobre Productos</Fit></div>
        <div className="h-[18.700px]"><Fit w={621}>Al hacer click sobre el nombre de la página, <i>Productos Habilitados</i>, se <Squiggle color="blue">desplegaran </Squiggle>las</Fit></div>
        <div className="h-[18.200px]"><Fit w={146}>siguientes opciones:</Fit></div>
        <div className="h-[20px] pl-[162px] font-bold"><Fit w={302}>Figura 12.5: Opciones sobre Productos</Fit></div>
        <div className="mt-[2px] ml-[217px] flex flex-col">
          <FigureBtn label="Crear nuevo producto " w={132} cls="h-[33px]" icon={<Svg w={15} h={13}><path d="M0 5h15v2H14l-1 6H2L1 7H0z" fill="#333" /><path d="M4 5l2.500-4.500M11 5L8.500 .5" stroke="#333" strokeWidth="1.600" /><path d="M5 8v3M7.500 8v3M10 8v3" stroke="#fff" /></Svg>} />
          <FigureBtn label="Imprimir listado en Excel " w={148} cls="mt-[6px] h-[33px]" icon={<ListIcon size={13} />} />
          <FigureBtn label="Imprimir listado en PDF " w={143} cls="mt-[6px] h-[33px]" icon={<FileIcon size={13} />} />
        </div>
        <div className="mt-[23px]">
          <Bullet><span className={JB}><i>Botón Crear</i>, se desplegará el formulario para crear un producto (Ver Crear</span><Fit w={71}>Producto)</Fit></Bullet>
          <Bullet><span className={JB}><i>Botón Imprimir en Excel,</i> automáticamente se guarda un archivo Excel con el</span><Fit w={149}>listado de productos.</Fit></Bullet>
          <Bullet><span className={JB}><i>Botón Imprimir en <Squiggle color="red">Pdf</Squiggle></i>, automáticamente se abrirá un <Squiggle color="red">Pdf</Squiggle> con el listado de</span><Fit w={75}>productos.</Fit></Bullet>
        </div>
        <div className="-mt-[2px] text-[17.600px] leading-[22px] text-[#666]"><Fit w={287}>Listado de Productos Deshabilitados</Fit></div>
      </div>
    </div>
  );
}

function StatusBar() {
  return (
    <div className="flex h-[21px] flex-1 items-center border-t border-[#c6c6c6] bg-[#f1f1f1] text-[11px] leading-[18px] text-[#555]">
      <Fit w={75} className="-mt-[2px] ml-[8px]">Página 8 de 13</Fit>
      <Fit w={102} className="-mt-[2px] ml-[19px]">16 de 2476 palabras</Fit>
      <Svg w={15} h={13} className="ml-[19px]"><path d="M7 2.500C6 1 3 .5 .5 .5v10c3 0 5 .5 6.500 2M7 2.500v10M7 2.500C8 1 9 .8 10 .6M7 12.500c1-1 2-1.500 3-1.700M9 4l5 5M14 4L9 9M11.500 .8h2.500M12 11h2" stroke="#666" /></Svg>
      <Fit w={102} className="-mt-[2px] ml-[17px]">Español (Argentina)</Fit>
      <Svg w={13} h={12} className="ml-[30px]"><path d="M.5 1.500h5l1 1 1-1h5v9h-5l-1 1-1-1h-5zM6.500 2v9M2 3.500h3M2 5.500h3M2 7.500h3M8 3.500h3M8 5.500h3M8 7.500h3" stroke="#666" /></Svg>
      <div className="ml-[13px] flex h-full w-[38px] items-center justify-center bg-[#c6c6c6]"><Svg w={14} h={13}><path d="M.5 .5h13v12H.5zM2.500 2.500h9M2.500 4.500h9M2.500 6.500h9M2.500 8.500h9M2.500 10.500h9" stroke="#666" /></Svg></div>
      <Svg w={14} h={13} className="ml-[12px]"><path d="M6 11.500H.5V.5h11v5M2 2.500h8M2 4.500h8M2 6.500h4M2 8.500h3" stroke="#666" /><circle cx="10" cy="9" r="3.500" fill="#777" /><path d="M7.500 8.500l2-2 1 2-1 1.500M11 10l1.500-1" stroke="#fff" /></Svg>
      <div className="ml-[17px] h-[2px] w-[6px] bg-[#555]" />
      <div className="ml-[4px] h-px w-[50px] bg-[#999]" />
      <div className="h-[11px] w-[4px] bg-[#555]" />
      <div className="h-px w-[46px] bg-[#999]" />
      <Svg w={8} h={8} className="ml-[4px]"><path d="M4 0v8M0 4h8" stroke="#555" strokeWidth="2" /></Svg>
      <Fit w={30} className="-mt-[2px] ml-[16px]">110 %</Fit>
    </div>
  );
}

function Word() {
  return (
    <div className={`flex h-[727px] w-[682px] flex-col border-t border-r border-b border-[#7c7c7c] bg-[#f1f1f1] ${UI}`}>
      <WordTitle />
      <Ribbon />
      <Document />
      <StatusBar />
    </div>
  );
}

function TaskButton({ children, cls, bar }: { children: React.ReactNode; cls: string; bar: React.ReactNode }) {
  return (
    <div className={`flex h-[41px] flex-col items-center justify-between ${cls}`}>
      <div className="flex h-[39px] items-center pt-[1px]">{children}</div>
      <div className="flex h-[2px] w-full">{bar}</div>
    </div>
  );
}
const full = <div className="h-full w-full bg-[#76b9ed]" />;
const split = (
  <>
    <div className="h-full w-[31px] bg-[#76b9ed]" />
    <div className="h-full flex-1 bg-[#5585ad]" />
  </>
);

function Taskbar() {
  return (
    <div className={`flex h-[41px] bg-[#101010] text-white ${UI}`}>
      <Svg w={16} h={16} className="mt-[13px] ml-[16px]"><path d="M0 2.300L6.500 1.400v6.100H0zM7.300 1.300L16 0v7.500H7.300zM0 8.300h6.500v6.300L0 13.700zM7.300 8.300H16V16l-8.700-1.300z" fill="#fff" /></Svg>
      <Svg w={16} h={17} className="mt-[12px] ml-[32px]"><circle cx="10.500" cy="5.800" r="5" stroke="#fff" strokeWidth="1.300" /><path d="M7 9.500L.5 16" stroke="#fff" strokeWidth="1.300" /></Svg>
      <Svg w={17} h={16} className="mt-[12px] ml-[32px]"><path d="M.5 0v2.500h10V0M.5 16v-2.500h10V16M.5 5.500h10v5H.5zM14.500 0v3M14.500 8v8" stroke="#fff" strokeWidth="1.100" /><path d="M13 4h3v3h-3z" fill="#fff" /></Svg>
      <TaskButton cls="ml-[18px] w-[48px] bg-[#363636]" bar={full}><OperaO size={23} hole="#363636" /></TaskButton>
      <TaskButton cls="ml-[5px] w-[40px]" bar={split}>
        <Svg w={22} h={19}><path d="M0 0h9l1 2h11v4H0z" fill="#e9a73b" /><path d="M0 3h22v15H0z" fill="#fde28f" /><path d="M4 18v-6l2-2h10l2 2v6h-4v-4H8v4z" fill="#3bb1e8" /></Svg>
      </TaskButton>
      <TaskButton cls="ml-[9px] w-[40px]" bar={full}>
        <Svg w={24} h={24}><path d="M17.500 0v6.500L3.500 18 .5 15.500z" fill="#0a6fb5" /><path d="M17.500 24v-6.500L3.500 6 .5 8.500z" fill="#0b87d3" /><path d="M17.500 0L24 2.800v18.400L17.500 24z" fill="#29a6f2" /></Svg>
      </TaskButton>
      <TaskButton cls="ml-[9px] w-[40px]" bar={full}>
        <Svg w={23} h={19}><path d="M.5 .5h22v18H.5z" fill="#000" stroke="#9a9a9a" /><path d="M1 1h21v2H1z" fill="#d6d6d6" /><path d="M15 2h5" stroke="#555" /><path d="M6 6H4v3h2M8 6v.7M8 8v1M10 6l1.500 3M13 9h5" stroke="#ddd" /></Svg>
      </TaskButton>
      <TaskButton cls="ml-[9px] w-[40px]" bar={split}>
        <Svg w={23} h={23}><path d="M8 1l14 1v18l-5 2z" fill="#e8e4d4" /><path d="M8 1l13 1-4 19L0 17z" fill="#7db9c5" /><path d="M12 2l8 1-4 17-8-1z" fill="#a5d5dc" opacity=".7" /><path d="M0 17l17 4-1 1.500L1 19z" fill="#d0e3e5" /><path d="M8 1h13" stroke="#888" strokeDasharray="1 1" /></Svg>
      </TaskButton>
      <TaskButton cls="ml-[9px] w-[40px]" bar={full}>
        <div className="flex items-center">
          <div className="flex h-[21px] w-[13px] items-center justify-center bg-[#2b579a] text-[9px] font-bold">W</div>
          <Svg w={9} h={17}><path d="M0 0h9v17H0z" fill="#fff" /><path d="M0 3.500h7M0 6.500h7M0 9.500h7M0 12.500h7" stroke="#2b579a" /></Svg>
        </div>
      </TaskButton>
      <Svg w={12} h={7} className="mt-[17px] ml-[747px]"><path d="M.7 6.300L6 1l5.300 5.300" stroke="#fff" strokeWidth="1.300" /></Svg>
      <Svg w={16} h={12} className="mt-[14px] ml-[10px]"><path d="M5 3.500h9.500v7H4V8" stroke="#fff" strokeWidth="1.200" /><path d="M6 5h7v4H6zM15 5.500h1v3h-1zM0 2h5v2c0 2-5 2-5 0zM1 0h1v2H1zM3.500 0h1v2h-1zM2 5h1v3H2z" fill="#fff" /></Svg>
      <Svg w={13} h={13} className="mt-[15px] ml-[11px]"><path d="M1 12C1 6 6 1 12.500 1" stroke="#8a8a8a" strokeWidth="1.200" /><path d="M4 12c0-4.500 4-8.500 8.500-8.500M7 12c0-3 2.500-5.500 5.500-5.500" stroke="#eee" strokeWidth="1.200" /><circle cx="11" cy="11" r="1.500" fill="#fff" /></Svg>
      <div className="mt-[3px] ml-[7px] flex w-[58px] flex-col items-center text-[11.500px] leading-[18px]"><Fit w={27}>11:14</Fit><Fit w={58}>11/12/2019</Fit></div>
      <Svg w={16} h={16} className="mt-[13px] ml-[15px]"><path d="M.7 .7h14.600v11.600h-4.600L8 15l-2.700-2.700H.7z" stroke="#fff" strokeWidth="1.200" /></Svg>
      <div className="ml-auto h-full w-[5px] border-l border-[#555]" />
    </div>
  );
}

export default function App() {
  return (
    <div className="flex h-[768px] w-[1366px] flex-col overflow-hidden bg-[#101010]">
      <div className="flex h-[727px]">
        <Browser />
        <Word />
      </div>
      <Taskbar />
    </div>
  );
}
